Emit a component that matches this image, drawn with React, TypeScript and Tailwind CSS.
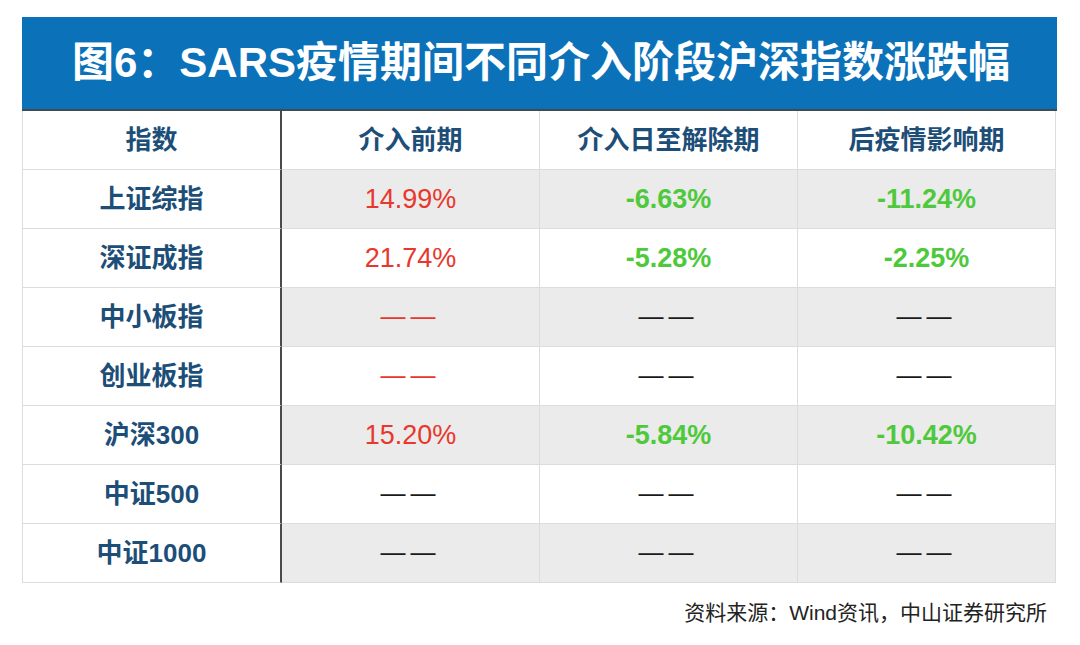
const head = ["指数", "介入前期", "介入日至解除期", "后疫情影响期"];

type Cell = { v: string; c: "red" | "green" | "dash" | "reddash" };

const rows: { name: string; cells: Cell[] }[] = [
  { name: "上证综指", cells: [{ v: "14.99%", c: "red" }, { v: "-6.63%", c: "green" }, { v: "-11.24%", c: "green" }] },
  { name: "深证成指", cells: [{ v: "21.74%", c: "red" }, { v: "-5.28%", c: "green" }, { v: "-2.25%", c: "green" }] },
  { name: "中小板指", cells: [{ v: "——", c: "reddash" }, { v: "——", c: "dash" }, { v: "——", c: "dash" }] },
  { name: "创业板指", cells: [{ v: "——", c: "reddash" }, { v: "——", c: "dash" }, { v: "——", c: "dash" }] },
  { name: "沪深300", cells: [{ v: "15.20%", c: "red" }, { v: "-5.84%", c: "green" }, { v: "-10.42%", c: "green" }] },
  { name: "中证500", cells: [{ v: "——", c: "dash" }, { v: "——", c: "dash" }, { v: "——", c: "dash" }] },
  { name: "中证1000", cells: [{ v: "——", c: "dash" }, { v: "——", c: "dash" }, { v: "——", c: "dash" }] },
];

const font = "font-['Liberation_Sans','Noto_Sans_CJK_SC',sans-serif]";

const colorOf = (c: Cell["c"]) => {
  if (c === "red") return "text-[27px] text-[#e8382c]";
  if (c === "green") return "text-[27px] text-[#4fc93c] font-bold";
  if (c === "reddash") return "text-[25px] text-[#e8382c] tracking-[5px]";
  return "text-[25px] text-[#1a1a1a] tracking-[5px]";
};

export default function App() {
  return (
    <div className={`w-[1080px] h-[645px] bg-white ${font}`}>
      <div className="pt-[17px] pl-[22px] w-[1057px]">
        <div className="h-[94px] bg-[#0b72b9] flex items-center pl-[50px] border-b-2 border-[#3f4a52]">
          <h1 className="text-white font-bold text-[42px] leading-none">
            图6：SARS疫情期间不同介入阶段沪深指数涨跌幅
          </h1>
        </div>
        <div className="grid grid-cols-[259px_258px_258px_258px] border-l border-[#dcdcdc]">
          {head.map((h, i) => (
            <div
              key={h}
              className={`h-[59px] flex items-center justify-center text-[26px] font-bold text-[#1c4e78] border-b border-[#dcdcdc] ${
                i === 0 ? "border-r-2 border-r-[#4a4a4a]" : "border-r"
              }`}
            >
              {h}
            </div>
          ))}
          {rows.map((r, ri) => (
            <Row key={r.name} name={r.name} cells={r.cells} shaded={ri % 2 === 0} />
          ))}
        </div>
      </div>
      <p className="mt-[14px] pr-[33px] text-right text-[21px] text-[#222]">
        资料来源：Wind资讯，中山证券研究所
      </p>
    </div>
  );
}

function Row({ name, cells, shaded }: { name: string; cells: Cell[]; shaded: boolean }) {
  return (
    <>
      <div className="h-[59px] flex items-center justify-center text-[26px] font-bold text-[#1c4e78] border-b border-[#dcdcdc] border-r-2 border-r-[#4a4a4a] bg-white">
        {name}
      </div>
      {cells.map((c, i) => (
        <div
          key={i}
          className={`h-[59px] flex items-center justify-center border-b border-r border-[#dcdcdc] ${
            shaded ? "bg-[#ebebeb]" : "bg-white"
          } ${colorOf(c.c)}`}
        >
          {c.v}
        </div>
      ))}
    </>
  );
}
